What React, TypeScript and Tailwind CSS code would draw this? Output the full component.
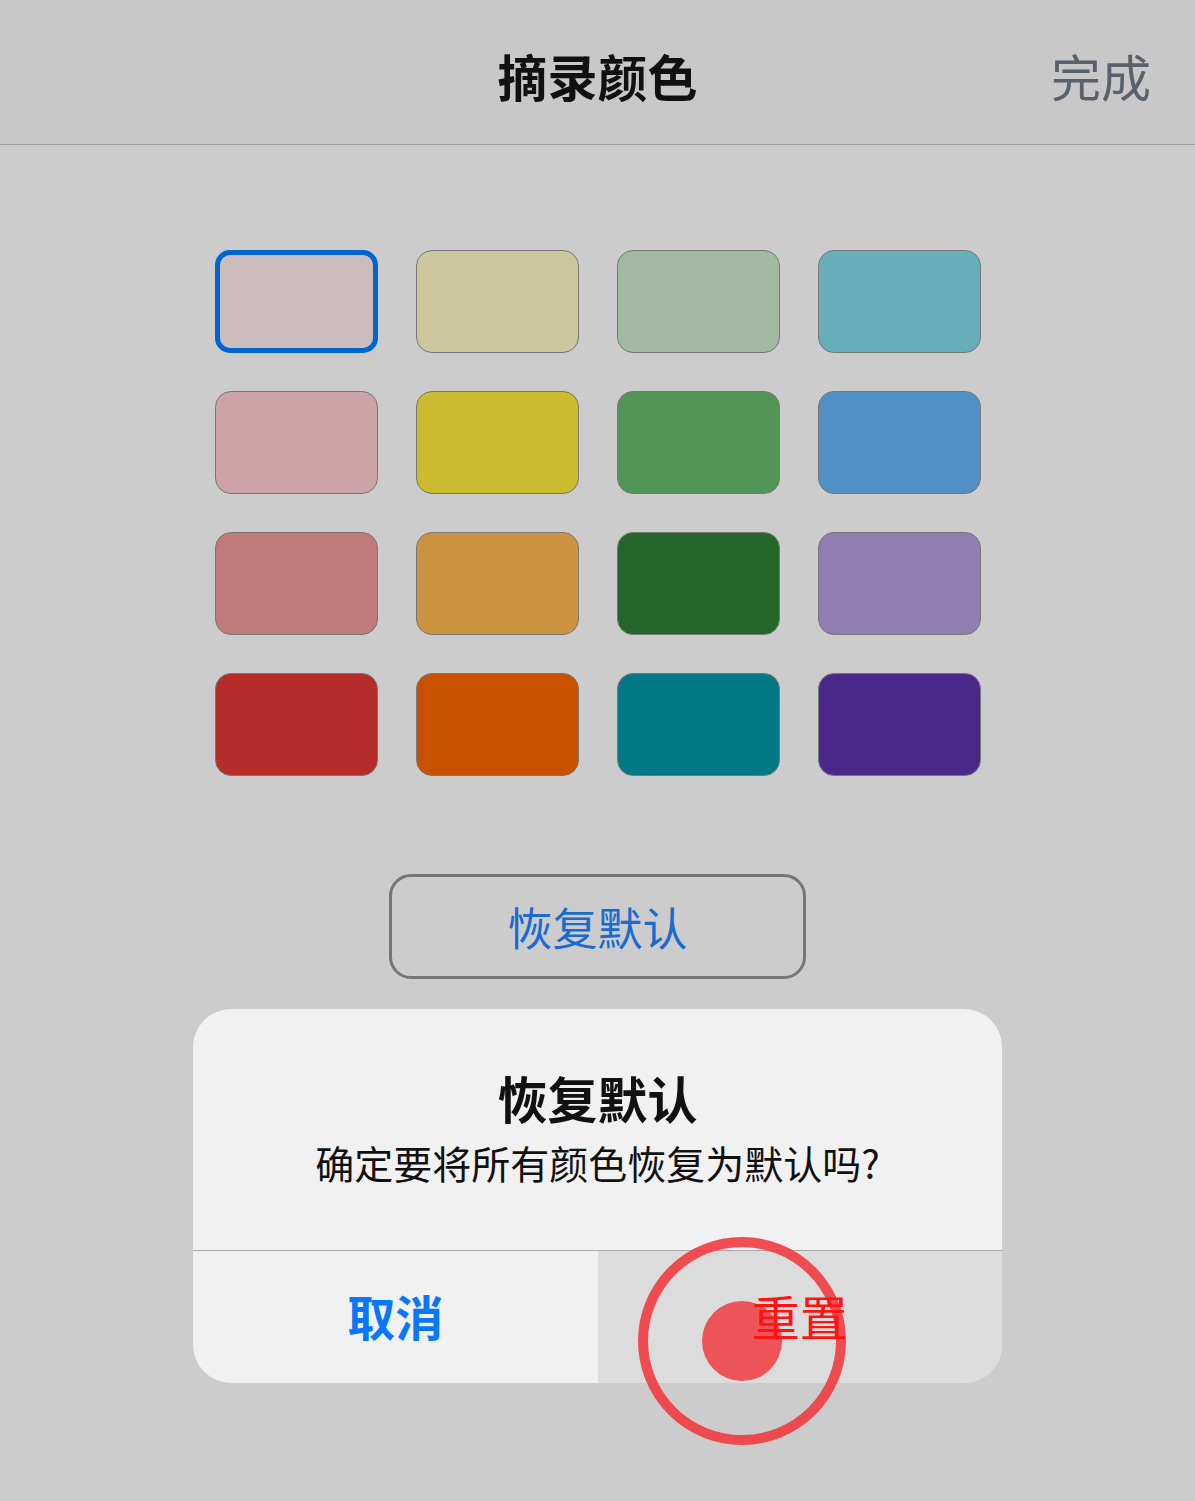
import React, {useState} from 'react';

const swatches: string[] = [
    '#cbbdbe', '#cbc69c', '#a1b9a0', '#66afba',
    '#cda3a7', '#cbbc2f', '#519656', '#5190c5',
    '#bf7b7a', '#cc9340', '#24652a', '#917eb0',
    '#b52c2b', '#c95200', '#007885', '#4a2889',
];

const font = {fontFamily: '"Noto Sans CJK SC", "Noto Sans", sans-serif'};

const App: React.FC = () => {
    const [selected, setSelected] = useState<number>(0);

    return (
        <div className="min-h-[1501px] w-full bg-[#cccccc]" style={font}>
            {/* nav bar */}
            <div className="relative flex h-[145px] items-center justify-center border-b border-[#9b9b9b] bg-[#c8c8c8] pt-[6px]">
                <h1 className="text-[50px] font-bold leading-none text-[#111]">摘录颜色</h1>
                <button className="absolute right-[44px] text-[50px] leading-none text-[#59626c]">完成</button>
            </div>

            {/* color grid */}
            <div className="mx-auto mt-[105px] grid w-[766px] grid-cols-4 gap-x-[38px] gap-y-[38px]">
                {swatches.map((color, i) => (
                    <button
                        key={color}
                        onClick={() => setSelected(i)}
                        className={
                            i === selected
                                ? 'h-[103px] rounded-[15px] border-[5px] border-[#0064d2]'
                                : 'h-[103px] rounded-[16px] border-[1.5px] border-[#777]'
                        }
                        style={{backgroundColor: color}}
                    />
                ))}
            </div>

            <div className="mt-[98px] flex justify-center">
                <button className="flex h-[105px] w-[417px] items-center justify-center rounded-[22px] border-[3px] border-[#767676] text-[45px] leading-none text-[#1a6ad0]">
                    恢复默认
                </button>
            </div>

            {/* confirm alert */}
            <div className="relative mx-auto mt-[30px] w-[809px] rounded-[38px] bg-[#f1f1f1]">
                <div className="flex h-[241px] flex-col items-center pt-[63px]">
                    <h2 className="text-[50px] font-bold leading-[50px] text-[#111]">恢复默认</h2>
                    <p className="mt-[18px] text-[39px] leading-[44px] text-[#111]">确定要将所有颜色恢复为默认吗?</p>
                </div>
                <div className="flex h-[133px] border-t border-[#a9a9a9]">
                    <button className="flex w-1/2 items-center justify-center pb-[4px] text-[48px] font-bold leading-none text-[#0a78f6]">
                        取消
                    </button>
                    <button className="flex w-1/2 items-center justify-center rounded-br-[38px] bg-[#dcdcdc] pb-[4px] text-[48px] leading-none text-[#ff1414]">
                        <span className="relative z-10">重置</span>
                    </button>
                </div>

                {/* touch marker */}
                <div className="pointer-events-none absolute left-[445px] top-[228px] flex h-[208px] w-[208px] items-center justify-center rounded-full border-[10px] border-[#f03c41]/90">
                    <div className="h-[80px] w-[80px] rounded-full bg-[#f03c41]/85"/>
                </div>
            </div>
        </div>
    );
};

export default App;
